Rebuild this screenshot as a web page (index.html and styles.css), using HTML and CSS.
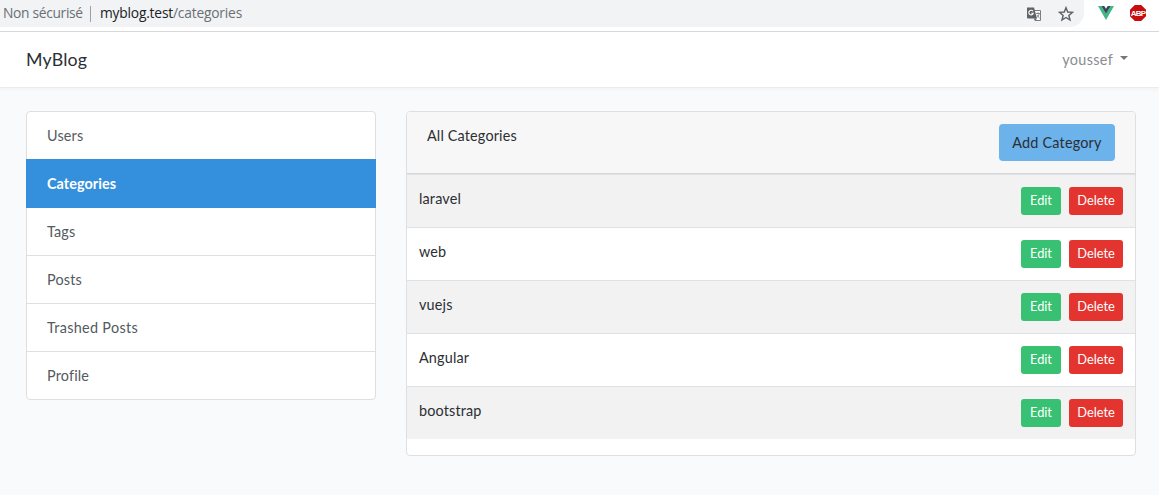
FILE: index.html
```html
<!DOCTYPE html>
<html lang="en">
<head>
<meta charset="utf-8">
<title>MyBlog</title>
<link rel="stylesheet" href="styles.css">
</head>
<body>
<div class="toolbar">
  <div class="address">
    <span class="security">Non sécurisé</span>
    <span class="separator"></span>
    <span class="url"><b>myblog.test</b>/categories</span>
    <svg class="translate" width="16" height="16" viewBox="0 0 16 16">
      <path d="M7 4.5h7.5v10H9" fill="#fff" stroke="#7b7e82"/>
      <path d="M1 1.5h7l3 11H2q-1 0-1-1z" fill="#5f6368"/>
      <path d="M7.8 12.5h3.2L9 15z" fill="#5f6368"/>
      <path d="M7 5.3A2.3 2.3 0 1 0 7.3 7.2H5.3" fill="none" stroke="#fff" stroke-width="1.1"/>
      <path d="M10 7.5h4M12 6.3v1.2M13.3 7.5q-.5 2.5-2.4 4M11 9q1 1.8 2.6 3" fill="none" stroke="#7b7e82" stroke-width=".9"/>
    </svg>
    <svg class="star" width="16" height="16" viewBox="0 0 16 16">
      <path d="M8 1.7l1.75 4.35 4.7.35-3.6 3 1.15 4.6L8 11.5 4 14l1.15-4.6-3.6-3 4.7-.35z" fill="none" stroke="#5f6368" stroke-width="1.45"/>
    </svg>
  </div>
  <svg class="vue" width="16" height="14" viewBox="0 0 16 14">
    <path d="M0 0h3.3L8 8l4.7-8H16L8 14z" fill="#41b883"/>
    <path d="M3.3 0h3L8 2.8 9.7 0h3L8 8z" fill="#35495e"/>
  </svg>
  <span class="abp">ABP</span>
</div>
<nav class="navbar">
  <a class="brand">MyBlog</a>
  <a class="user">youssef<span class="caret"></span></a>
</nav>
<main class="content">
  <ul class="menu">
    <li>Users</li>
    <li class="active">Categories</li>
    <li>Tags</li>
    <li>Posts</li>
    <li class="wide">Trashed Posts</li>
    <li>Profile</li>
  </ul>
  <section class="card">
    <header class="card-header"><span>All Categories</span><a class="add">Add Category</a></header>
    <div class="row"><span>laravel</span><a class="btn edit">Edit</a><a class="btn delete">Delete</a></div>
    <div class="row"><span>web</span><a class="btn edit">Edit</a><a class="btn delete">Delete</a></div>
    <div class="row"><span>vuejs</span><a class="btn edit">Edit</a><a class="btn delete">Delete</a></div>
    <div class="row"><span>Angular</span><a class="btn edit">Edit</a><a class="btn delete">Delete</a></div>
    <div class="row"><span>bootstrap</span><a class="btn edit">Edit</a><a class="btn delete">Delete</a></div>
  </section>
</main>
</body>
</html>
```
FILE: styles.css
```css
* { box-sizing: border-box; }
body {
  margin: 0;
  height: 495px;
  overflow: hidden;
  background: #f8fafc;
  color: #2b2f33;
  font: 14.4px/23px Lato, "Open Sans", sans-serif;
  letter-spacing: .16px;
}
.toolbar {
  display: flex;
  height: 32px;
  background: #fff;
  border-bottom: 1px solid #d8d9db;
}
.address {
  display: flex;
  align-items: center;
  width: 1084px;
  height: 27px;
  padding-left: 3px;
  background: #f1f3f4;
  border-radius: 0 0 14px 0;
  color: #6b6f74;
  font: 13.8px/20px "Open Sans", sans-serif;
}
.security { width: 87px; height: 21px; letter-spacing: -.32px; white-space: nowrap; }
.separator { width: 1px; height: 16px; margin-right: 9px; background: #9aa0a6; }
.url { height: 21px; letter-spacing: -.2px; }
.url b { color: #202124; font-weight: 400; }
.translate { margin-left: auto; }
.star { margin: 0 10px 0 16px; }
.vue { margin: 6px 0 0 14px; }
.abp {
  width: 16px;
  height: 16px;
  margin: 5px 0 0 16px;
  clip-path: polygon(30% 0, 70% 0, 100% 30%, 100% 70%, 70% 100%, 30% 100%, 0 70%, 0 30%);
  background: #c70d0d;
  color: #fff;
  font: bold 8px/17px "Liberation Sans", sans-serif;
  letter-spacing: -.8px;
  text-align: center;
}
.navbar {
  position: relative;
  display: flex;
  align-items: center;
  justify-content: space-between;
  height: 55px;
  padding: 0 31px 0 26px;
  background: #fff;
  box-shadow: 0 2px 4px rgba(0, 0, 0, .04), 0 1px 0 rgba(0, 0, 0, .03);
}
.brand { font-size: 17.8px; letter-spacing: .2px; }
.user { display: flex; align-items: center; color: #8a8c8e; letter-spacing: .32px; }
.caret { margin: -3px 0 0 7px; border: 4.5px solid transparent; border-top-color: #777; border-bottom: 0; }
.content {
  display: flex;
  align-items: flex-start;
  gap: 30px;
  padding: 24px 23px 0 26px;
}
.menu {
  width: 350px;
  margin: 0;
  padding: 0;
  list-style: none;
  background: #fff;
  border: 1px solid #dfdfdf;
  border-radius: 4px;
  color: #535a60;
}
.menu li { height: 48px; padding: 12px 20px; border-bottom: 1px solid #dfdfdf; }
.menu li:first-child, .menu li:last-child { height: 47px; border: 0; }
.menu .wide { letter-spacing: .32px; }
.menu .active {
  height: 49px;
  margin: 0 -1px;
  padding: 13px 21px;
  border: 0;
  background: #3490dc;
  color: #fff;
  font-weight: 700;
  letter-spacing: .06px;
}
.card {
  flex: 1;
  height: 345px;
  overflow: hidden;
  background: #fff;
  border: 1px solid #dfdfdf;
  border-radius: 4px;
}
.card-header {
  display: flex;
  justify-content: space-between;
  height: 62px;
  padding: 12px 20px;
  background: #f7f7f7;
  border-bottom: 1px solid #d8d8d8;
}
.add {
  width: 116px;
  height: 37px;
  border-radius: 4px;
  background: #6cb2eb;
  line-height: 37px;
  text-align: center;
  letter-spacing: .2px;
}
.row {
  display: flex;
  height: 53px;
  padding: 12px;
  gap: 8px;
  border-top: 1px solid #dee2e6;
}
.row:nth-child(even) { background: #f2f2f2; }
.row span { flex: 1; }
.btn {
  height: 28px;
  border-radius: 3px;
  color: #fff;
  font-size: 12.8px;
  line-height: 27px;
  text-align: center;
  letter-spacing: 0;
}
.edit { width: 40px; background: #38c172; }
.delete { width: 54px; background: #e3342f; }
```
